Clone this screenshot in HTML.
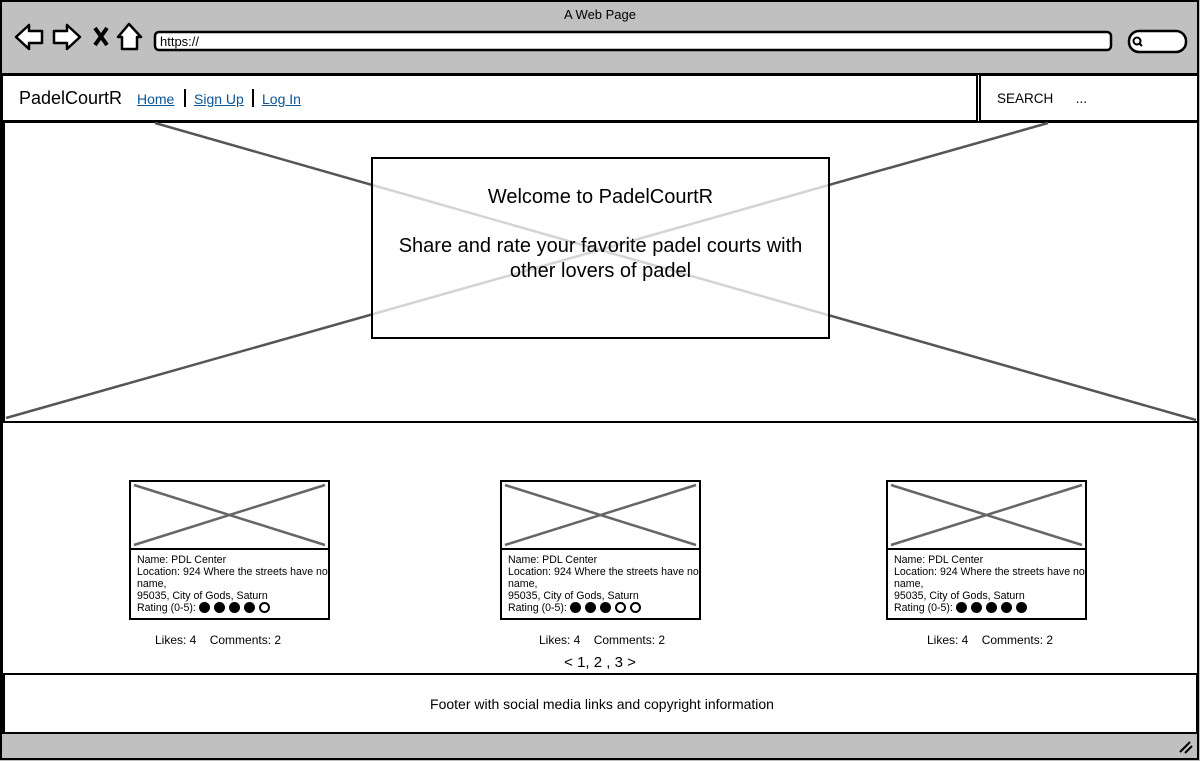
<!DOCTYPE html>
<html><head><meta charset="utf-8"><style>
body{margin:0;width:1200px;height:761px;position:relative;background:#c0c0c0;font-family:"Liberation Sans",sans-serif;overflow:hidden}
.a{position:absolute}
.t{position:absolute;white-space:nowrap;color:#000}
a{color:#0b5394;text-decoration:underline}
.card{position:absolute;width:199px;font-size:10.6px;line-height:12px}
.dot{display:inline-block;width:11px;height:11px;border-radius:50%;background:#000;vertical-align:-2px;margin-right:4px;box-sizing:border-box}
.dot.o{background:#fff;border:2px solid #000}
</style></head><body>
<svg class="a" style="left:0;top:0" width="1200" height="761">
<rect x="1" y="1" width="1197" height="758" fill="#c0c0c0" stroke="#000" stroke-width="2"/>
<rect x="2" y="74" width="1196" height="659" fill="#fff" stroke="#000" stroke-width="2"/>
<rect x="155" y="32" width="956" height="18" rx="4" fill="#fff" stroke="#000" stroke-width="2.5"/>
<rect x="1129" y="31" width="57" height="21" rx="10" fill="#fff" stroke="#000" stroke-width="2.5"/>
<circle cx="1137" cy="41" r="3.5" fill="none" stroke="#000" stroke-width="2"/><line x1="1139" y1="43" x2="1142" y2="46" stroke="#000" stroke-width="2"/>
<path d="M16 37 L29 25 L29 31 L42 31 L42 43 L29 43 L29 49 Z" fill="#fff" stroke="#000" stroke-width="2.5" stroke-linejoin="round"/>
<path d="M80 37 L67 25 L67 31 L54 31 L54 43 L67 43 L67 49 Z" fill="#fff" stroke="#000" stroke-width="2.5" stroke-linejoin="round"/>
<path d="M95 28 L107 45 M107 28 L95 45" stroke="#000" stroke-width="4"/>
<path d="M129 24 L141 37 L137 37 L137 49 L122 49 L122 37 L118 37 Z" fill="#fff" stroke="#000" stroke-width="2.5" stroke-linejoin="round"/>
<rect x="2" y="75" width="975" height="46" fill="#fff" stroke="#000" stroke-width="2"/>
<rect x="980" y="75" width="218" height="46" fill="#fff" stroke="#000" stroke-width="2"/>
<line x1="185" y1="89" x2="185" y2="107" stroke="#000" stroke-width="2"/>
<line x1="253" y1="89" x2="253" y2="107" stroke="#000" stroke-width="2"/>
<rect x="4" y="122" width="1194" height="300" fill="#fff" stroke="#000" stroke-width="2"/>
<line x1="155" y1="123" x2="1196" y2="420" stroke="#555" stroke-width="2.5"/>
<line x1="1048" y1="123" x2="6" y2="418" stroke="#555" stroke-width="2.5"/>
<rect x="372" y="158" width="457" height="180" fill="#fff" fill-opacity="0.75" stroke="#000" stroke-width="2"/>
<g stroke="#000" stroke-width="2" fill="#fff">
<rect x="130" y="481" width="199" height="68"/><rect x="130" y="549" width="199" height="70"/>
<rect x="501" y="481" width="199" height="68"/><rect x="501" y="549" width="199" height="70"/>
<rect x="887" y="481" width="199" height="68"/><rect x="887" y="549" width="199" height="70"/>
</g>
<g stroke="#666" stroke-width="2.5">
<line x1="134" y1="485" x2="325" y2="545"/><line x1="325" y1="485" x2="134" y2="545"/>
<line x1="505" y1="485" x2="696" y2="545"/><line x1="696" y1="485" x2="505" y2="545"/>
<line x1="891" y1="485" x2="1082" y2="545"/><line x1="1082" y1="485" x2="891" y2="545"/>
</g>
<rect x="4" y="674" width="1193" height="59" fill="#fff" stroke="#000" stroke-width="2"/>
<path d="M1180 752 L1190 742 M1185 753 L1192 746" stroke="#000" stroke-width="2"/>
</svg>
<div class="t" style="left:0;width:1200px;text-align:center;top:7px;font-size:13px">A Web Page</div>
<div class="t" style="left:160px;top:34px;font-size:13px">https://</div>
<div class="t" style="left:19px;top:88px;font-size:18px">PadelCourtR</div>
<div class="t" style="left:137px;top:91px;font-size:14px"><a>Home</a></div>
<div class="t" style="left:194px;top:91px;font-size:14px"><a>Sign Up</a></div>
<div class="t" style="left:262px;top:91px;font-size:14px"><a>Log In</a></div>
<div class="t" style="left:997px;top:91px;font-size:13.5px">SEARCH &nbsp;&nbsp;&nbsp;&nbsp; ...</div>
<div class="t" style="left:372px;width:457px;text-align:center;top:186px;font-size:20px">Welcome to PadelCourtR</div>
<div class="t" style="left:362px;width:477px;text-align:center;top:234px;font-size:20px;line-height:25px;white-space:normal">Share and rate your favorite padel courts with<br>other lovers of padel</div>
<div class="card" style="left:137px;top:554px">Name: PDL Center<br>Location: 924 Where the streets have no<br>name,<br>95035, City of Gods, Saturn<br>Rating (0-5): <span class="dot"></span><span class="dot"></span><span class="dot"></span><span class="dot"></span><span class="dot o"></span></div>
<div class="card" style="left:508px;top:554px">Name: PDL Center<br>Location: 924 Where the streets have no<br>name,<br>95035, City of Gods, Saturn<br>Rating (0-5): <span class="dot"></span><span class="dot"></span><span class="dot"></span><span class="dot o"></span><span class="dot o"></span></div>
<div class="card" style="left:894px;top:554px">Name: PDL Center<br>Location: 924 Where the streets have no<br>name,<br>95035, City of Gods, Saturn<br>Rating (0-5): <span class="dot"></span><span class="dot"></span><span class="dot"></span><span class="dot"></span><span class="dot"></span></div>
<div class="t" style="left:155px;top:633px;font-size:12px">Likes: 4 &nbsp;&nbsp; Comments: 2</div>
<div class="t" style="left:539px;top:633px;font-size:12px">Likes: 4 &nbsp;&nbsp; Comments: 2</div>
<div class="t" style="left:927px;top:633px;font-size:12px">Likes: 4 &nbsp;&nbsp; Comments: 2</div>
<div class="t" style="left:0;width:1200px;text-align:center;top:654px;font-size:15px">&lt; 1, 2 , 3 &gt;</div>
<div class="t" style="left:0;width:1204px;text-align:center;top:696px;font-size:14px">Footer with social media links and copyright information</div>
</body></html>
